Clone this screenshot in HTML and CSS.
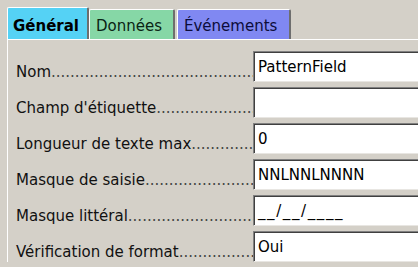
FILE: index.html
```html
<!DOCTYPE html>
<html>
  <head>
    <title>Propriétés : Champ masqué</title>
    <link rel="stylesheet" href="styles.css">
  </head>
  <body>
    <div class="tabbar">
      <div class="tab tab-general active">Général</div>
      <div class="tab tab-data">Données</div>
      <div class="tab tab-events">Événements</div>
    </div>

    <div class="panel">
      <div class="row">
        <div class="label"><span>Nom</span><span class="leader">..................................................</span></div>
        <div class="field">PatternField</div>
      </div>
      <div class="row">
        <div class="label"><span>Champ d'étiquette</span><span class="leader">..................................................</span></div>
        <div class="field"></div>
      </div>
      <div class="row">
        <div class="label"><span>Longueur de texte max</span><span class="leader">..................................................</span></div>
        <div class="field">0</div>
      </div>
      <div class="row">
        <div class="label"><span>Masque de saisie</span><span class="leader">..................................................</span></div>
        <div class="field">NNLNNLNNNN</div>
      </div>
      <div class="row">
        <div class="label"><span>Masque littéral</span><span class="leader">..................................................</span></div>
        <div class="field field-mask">__/__/____</div>
      </div>
      <div class="row">
        <div class="label"><span>Vérification de format</span><span class="leader">..................................................</span></div>
        <div class="field">Oui</div>
      </div>
    </div>
  </body>
</html>
```

FILE: styles.css
```css
body {
  margin: 0;
  padding: 0;
  font-family: "DejaVu Sans", Verdana, sans-serif;
  font-size: 15px;
  line-height: 18px;
  background: #d4d0c8;
  color: #000;
  overflow: hidden;
  height: 267px;
}

/* Tabs */
.tabbar {
  display: flex;
  align-items: flex-end;
  padding: 7px 0 0 7px;
}

.tab {
  padding: 7px 11px 4px 6px;
  border-top: 1px solid #ffffff;
  border-left: 1px solid #ffffff;
  border-right: 2px solid #6e6e6e;
  border-radius: 2px 2px 0 0;
  white-space: nowrap;
}

.tab.active {
  padding-top: 9px;
  font-weight: bold;
}

.tab-general {
  background: #55d2f5;
  padding-left: 5px;
  padding-right: 8px;
}

.tab-data {
  background: #86d7a6;
  color: #0a2414;
}

.tab-events {
  background: #8088f2;
  color: #0c0c3a;
  margin-left: 2px;
  padding-right: 12px;
}

/* Property panel */
.panel {
  margin-left: 7px;
  margin-right: -30px;
  border-top: 1px solid #ffffff;
  border-left: 1px solid #ffffff;
  padding: 11px 0 0 8px;
  display: flex;
  flex-direction: column;
  gap: 5px;
}

.row {
  display: flex;
  align-items: flex-end;
}

.label {
  width: 237px;
  display: flex;
  padding-bottom: 1px;
  white-space: nowrap;
  color: #111;
}

.leader {
  flex: 1;
  overflow: hidden;
  color: #444;
}

.field {
  flex: 1;
  height: 18px;
  padding: 6px 4px 5px 4px;
  background: #ffffff;
  border-top: 1px solid #808080;
  border-left: 1px solid #808080;
  border-bottom: 1px solid #e8e6e2;
  box-shadow: inset 1px 1px 0 #404040;
  white-space: nowrap;
}

.field-mask {
  letter-spacing: 1.6px;
}
```
